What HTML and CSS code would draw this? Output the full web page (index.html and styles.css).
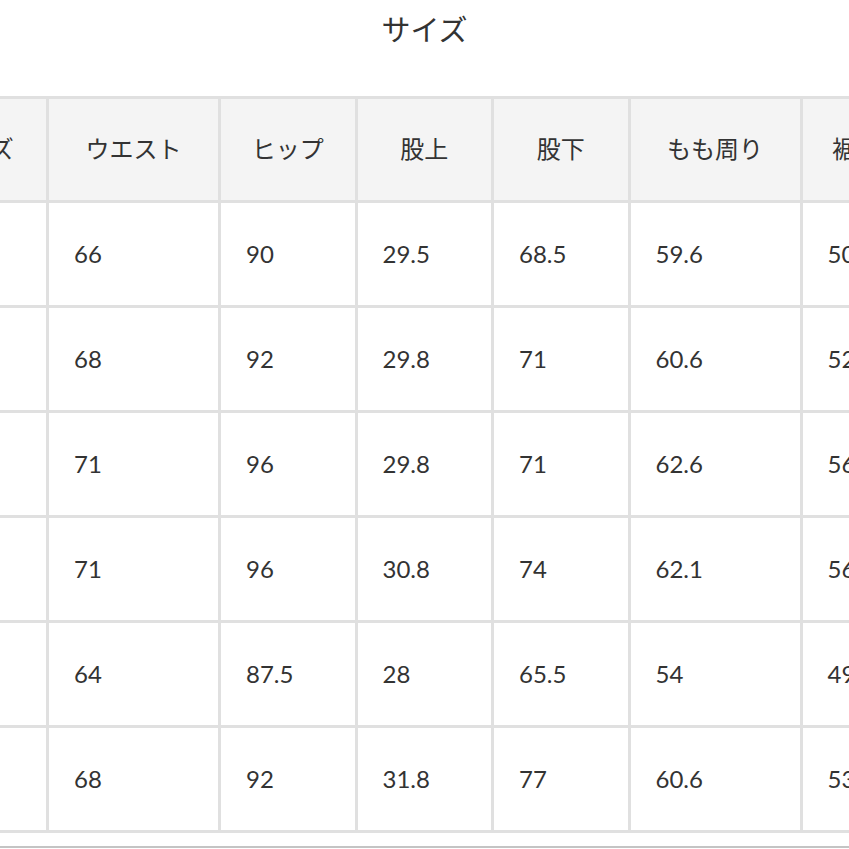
FILE: index.html
```html
<!DOCTYPE html>
<html lang="ja">
<head>
<meta charset="utf-8">
<link rel="stylesheet" href="styles.css">
</head>
<body>
<div class="page">
  <h1 class="title">サイズ</h1>
  <div class="table-wrap">
    <table class="size-table">
      <colgroup>
        <col class="c-size">
        <col class="c-wide">
        <col class="c-mid">
        <col class="c-mid">
        <col class="c-mid">
        <col class="c-wide">
        <col class="c-last">
      </colgroup>
      <thead>
        <tr>
          <th>サイズ</th><th>ウエスト</th><th>ヒップ</th><th>股上</th><th>股下</th><th>もも周り</th><th>裾幅</th>
        </tr>
      </thead>
      <tbody>
        <tr><td>XS</td><td>66</td><td>90</td><td>29.5</td><td>68.5</td><td>59.6</td><td>50</td></tr>
        <tr><td>S</td><td>68</td><td>92</td><td>29.8</td><td>71</td><td>60.6</td><td>52</td></tr>
        <tr><td>M</td><td>71</td><td>96</td><td>29.8</td><td>71</td><td>62.6</td><td>56</td></tr>
        <tr><td>L</td><td>71</td><td>96</td><td>30.8</td><td>74</td><td>62.1</td><td>56</td></tr>
        <tr><td>XL</td><td>64</td><td>87.5</td><td>28</td><td>65.5</td><td>54</td><td>49</td></tr>
        <tr><td>XXL</td><td>68</td><td>92</td><td>31.8</td><td>77</td><td>60.6</td><td>53</td></tr>
      </tbody>
    </table>
  </div>
  <div class="bottom-rule"></div>
</div>
</body>
</html>
```

FILE: styles.css
```css
html, body {
  margin: 0;
  padding: 0;
  background: #ffffff;
}

body {
  font-family: Lato, "Noto Sans CJK JP", sans-serif;
  color: #333333;
}

.page {
  width: 849px;
  height: 849px;
  overflow: hidden;
  position: relative;
}

.title {
  margin: 9px 0 0 0;
  font-size: 29px;
  font-weight: 400;
  line-height: 42px;
  text-align: center;
  color: #333333;
}

.table-wrap {
  margin-top: 45px;
  margin-left: -93px;
  width: 1100px;
}

.size-table {
  border-collapse: collapse;
  table-layout: fixed;
  width: 1002px;
}

.c-size { width: 139px; }
.c-wide { width: 172px; }
.c-mid { width: 136.5px; }
.c-last { width: 110px; }

.size-table th,
.size-table td {
  border: 3px solid #e0e0e0;
  font-size: 24px;
  font-weight: 400;
  color: #333333;
  padding: 0;
  white-space: nowrap;
  overflow: hidden;
}

.size-table th {
  background: #f4f4f4;
  text-align: center;
  height: 97px;
  padding-bottom: 4px;
}

.size-table td {
  background: #ffffff;
  text-align: left;
  padding-left: 25px;
  height: 100px;
  padding-bottom: 2px;
}

.bottom-rule {
  margin-top: 13px;
  height: 2px;
  background: #c4c4c4;
}
```
